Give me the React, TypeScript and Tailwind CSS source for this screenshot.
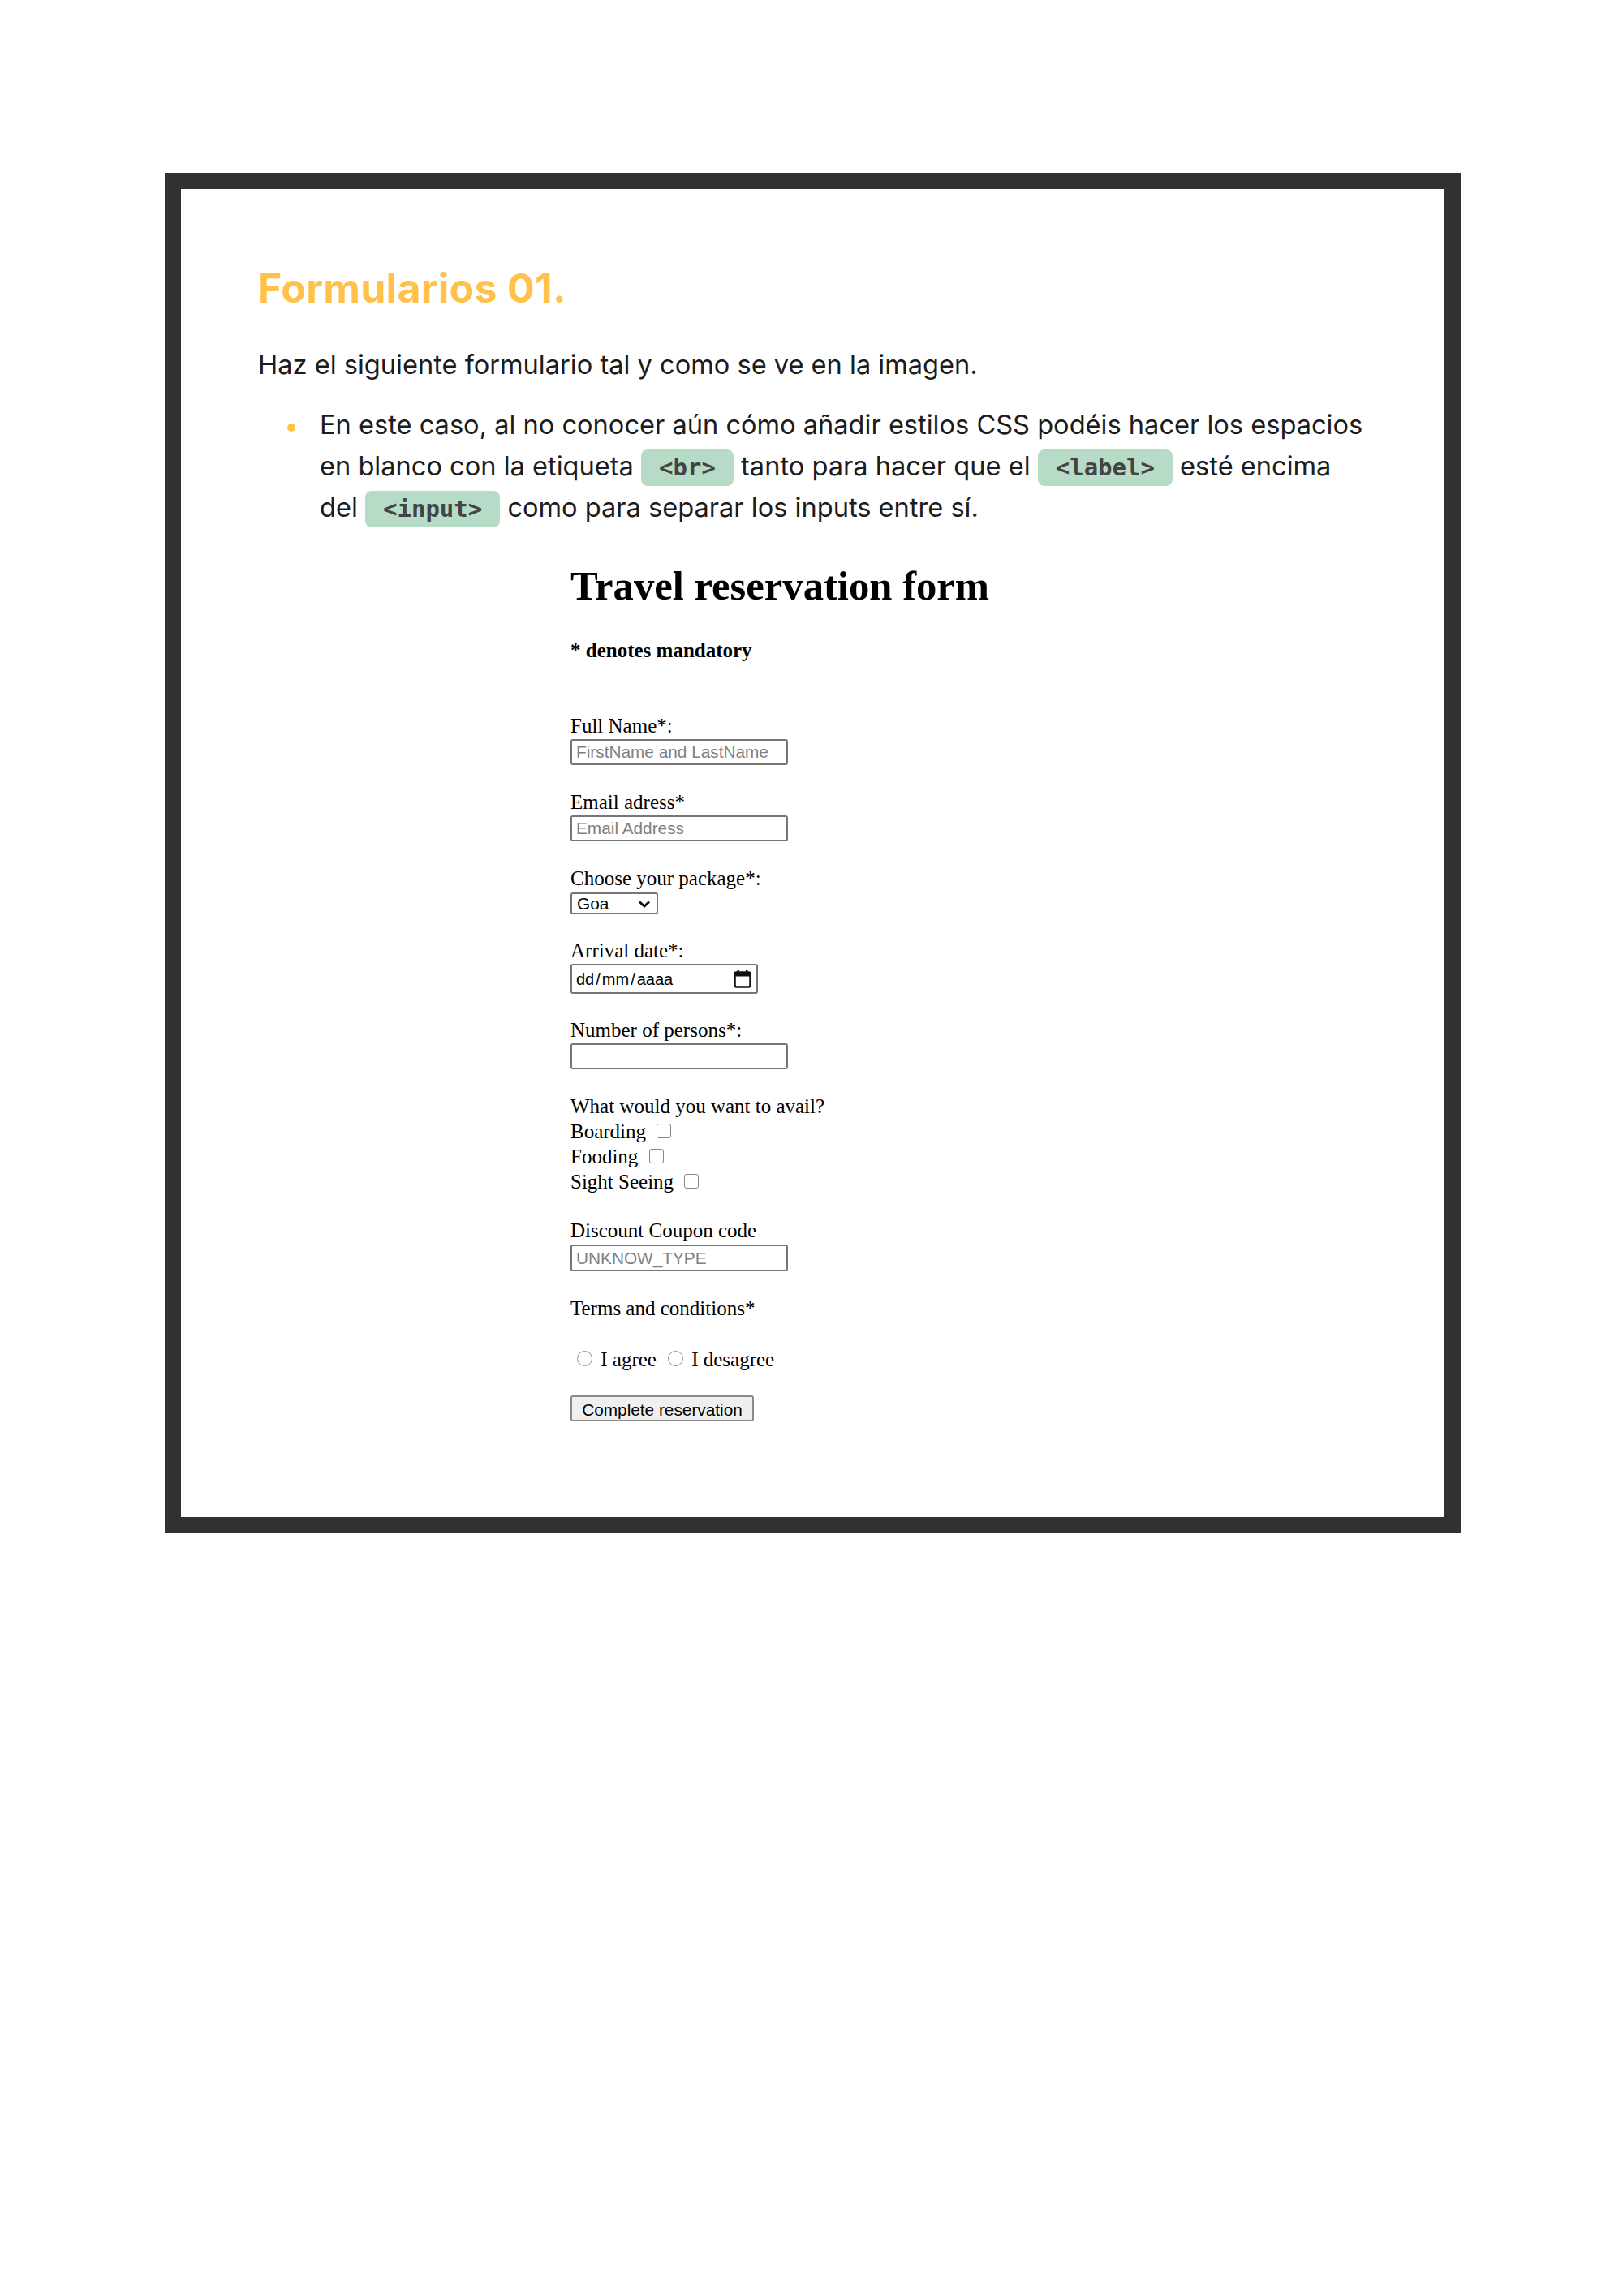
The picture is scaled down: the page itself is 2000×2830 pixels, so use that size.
import React from 'react';

const inputCls =
  "block h-[32px] w-[268px] rounded-[3px] border-2 border-[#767676] bg-white px-[5px] font-['Liberation_Sans',Arial,sans-serif] text-[20.8px] text-black outline-none placeholder:text-[#808080]";

const checkCls =
  'ml-[7px] inline-block h-[18px] w-[18px] appearance-none rounded-[3px] border-[1.5px] border-[#858585] bg-white align-baseline';

const radioCls =
  'ml-[8px] mr-[4px] inline-block h-[19px] w-[19px] appearance-none rounded-full border-[1.5px] border-[#8f8f8f] bg-white align-baseline';

function CodeTag({ children }: { children: React.ReactNode }) {
  return (
    <code className="inline-block rounded-[8px] bg-[#b6dcc7] px-[22px] font-['DejaVu_Sans_Mono',monospace] text-[29px] font-bold leading-[45px] text-[#444444]">
      {children}
    </code>
  );
}

function CalendarIcon() {
  return (
    <svg width="22" height="23" viewBox="0 0 22 23" fill="none">
      <rect x="1.5" y="3.5" width="19" height="18" rx="2" stroke="#111" strokeWidth="2.5" />
      <rect x="1.5" y="3.5" width="19" height="5" fill="#111" />
      <rect x="4.5" y="0.5" width="2.5" height="4" fill="#111" />
      <rect x="15" y="0.5" width="2.5" height="4" fill="#111" />
    </svg>
  );
}

function TravelForm() {
  return (
    <form
      className="ml-[385px] mt-[43.5px] font-['Liberation_Serif','Times_New_Roman',serif] text-[25px] text-black"
      onSubmit={(e) => e.preventDefault()}
    >
      <h1 className="text-[50.7px] font-bold leading-[57px]">Travel reservation form</h1>
      <p className="mt-[35.4px] font-bold leading-[29px]">* denotes mandatory</p>

      <div className="mt-[64.5px]">
        <label className="block leading-[29px]">Full Name*:</label>
        <input type="text" placeholder="FirstName and LastName" className={`mt-[2px] ${inputCls}`} />
      </div>

      <div className="mt-[31px]">
        <label className="block leading-[29px]">Email adress*</label>
        <input type="email" placeholder="Email Address" className={`mt-[2px] ${inputCls}`} />
      </div>

      <div className="mt-[31px]">
        <label className="block leading-[29px]">Choose your package*:</label>
        <div className="relative mt-[3px] h-[27px] w-[108px]">
          <select className="block h-full w-full appearance-none rounded-[3px] border-2 border-[#767676] bg-white pl-[6px] font-['Liberation_Sans',Arial,sans-serif] text-[20.8px] leading-[23px] text-black outline-none">
            <option>Goa</option>
            <option>Kerala</option>
            <option>Manali</option>
          </select>
          <svg
            className="pointer-events-none absolute right-[9px] top-[10px]"
            width="16"
            height="9"
            viewBox="0 0 16 9"
            fill="none"
          >
            <path d="M2 1.5 L8 7 L14 1.5" stroke="#111" strokeWidth="3" />
          </svg>
        </div>
      </div>

      <div className="mt-[30px]">
        <label className="block leading-[29px]">Arrival date*:</label>
        <div className="mt-[2px] flex h-[37px] w-[231px] items-center justify-between rounded-[3px] border-2 border-[#767676] bg-white pl-[5px] pr-[6px] font-['Liberation_Sans',Arial,sans-serif] text-[20px] text-black">
          <span>
            dd<span className="mx-[2px]">/</span>mm<span className="mx-[2px]">/</span>aaaa
          </span>
          <CalendarIcon />
        </div>
      </div>

      <div className="mt-[30px]">
        <label className="block leading-[29px]">Number of persons*:</label>
        <input type="number" className={`mt-[2px] ${inputCls}`} />
      </div>

      <div className="mt-[29.5px] leading-[31px]">
        <div>What would you want to avail?</div>
        <div>
          Boarding <input type="checkbox" className={checkCls} />
        </div>
        <div>
          Fooding <input type="checkbox" className={checkCls} />
        </div>
        <div>
          Sight Seeing <input type="checkbox" className={checkCls} />
        </div>
      </div>

      <div className="mt-[30.5px]">
        <label className="block leading-[29px]">Discount Coupon code</label>
        <input type="text" placeholder="UNKNOW_TYPE" className={`mt-[3px] h-[33px]! ${inputCls}`} />
      </div>

      <div className="mt-[30.5px]">
        <div className="leading-[29px]">Terms and conditions*</div>
        <div className="mt-[34px] leading-[29px]">
          <input type="radio" name="terms" className={radioCls} /> I agree
          <input type="radio" name="terms" className={`${radioCls} ml-[14px]`} /> I desagree
        </div>
      </div>

      <button
        type="submit"
        className="mt-[30px] block h-[32px] w-[226px] rounded-[3px] border-2 border-[#8a8a8a] bg-[#efefef] font-['Liberation_Sans',Arial,sans-serif] text-[20.8px] text-black"
      >
        Complete reservation
      </button>
    </form>
  );
}

export default function App() {
  return (
    <div className="min-h-[2830px] bg-white pl-[203px] pt-[213px]">
      <div className="h-[1677px] w-[1597px] border-[20px] border-[#313131] bg-white px-[95px] pt-[91.5px] font-['Inter','Noto_Sans',sans-serif] text-[#1c1c1c]">
        <h2 className="text-[50px] font-bold leading-[60px] tracking-[0.3px] text-[#ffc14a]">Formularios 01.</h2>
        <p className="mt-[39.4px] text-[32.6px] leading-[51px]">
          Haz el siguiente formulario tal y como se ve en la imagen.
        </p>
        <ul className="mt-[23px]">
          <li className="flex">
            <span className="ml-[36px] mr-[30px] mt-[24px] h-[10px] w-[10px] shrink-0 rounded-full bg-[#ffc14a]" />
            <p className="text-[32.6px] leading-[51px]">
              En este caso, al no conocer aún cómo añadir estilos CSS podéis hacer los espacios
              <br />
              en blanco con la etiqueta <CodeTag>&lt;br&gt;</CodeTag> tanto para hacer que el{' '}
              <CodeTag>&lt;label&gt;</CodeTag> esté encima
              <br />
              del <CodeTag>&lt;input&gt;</CodeTag> como para separar los inputs entre sí.
            </p>
          </li>
        </ul>
        <TravelForm />
      </div>
    </div>
  );
}
